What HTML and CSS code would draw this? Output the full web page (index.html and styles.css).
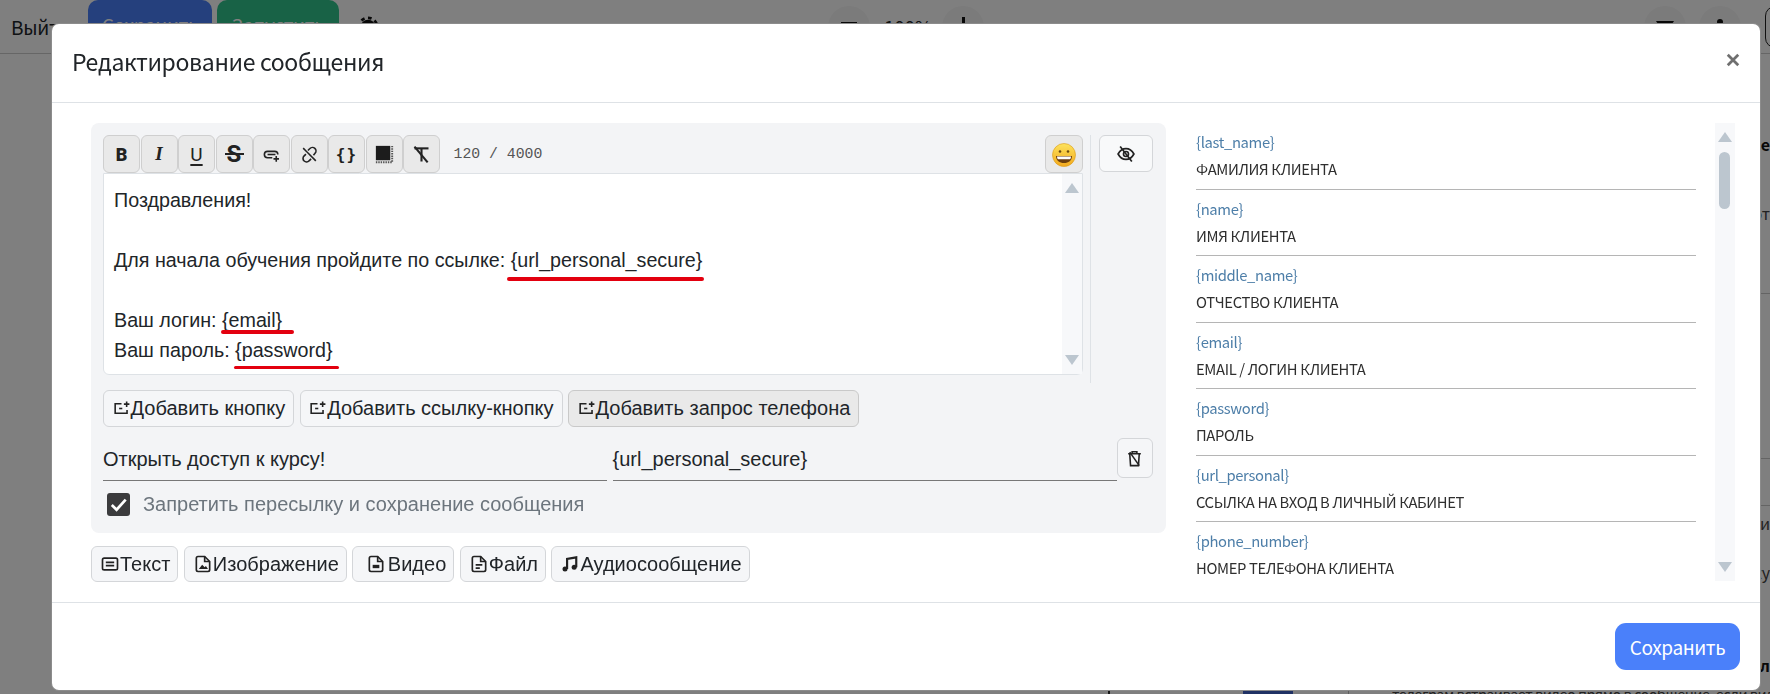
FILE: index.html
```html
<!DOCTYPE html>
<html lang="ru">
<head>
<meta charset="utf-8">
<title>Редактирование сообщения</title>
<link rel="stylesheet" href="styles.css">
</head>
<body>
<div class="behind">
  <header class="topbar">
    <span class="exit">Выйти</span>
    <span class="top-btn top-blue">Сохранить</span>
    <span class="top-btn top-green">Запустить</span>
    <svg class="top-gear" viewBox="0 0 24 24"><circle cx="12" cy="12" r="6" fill="none" stroke="#111" stroke-width="4"/><circle cx="12" cy="12" r="10" fill="none" stroke="#111" stroke-width="3" stroke-dasharray="4 3.8"/></svg>
    <span class="round round-minus"><i class="minus"></i></span>
    <span class="percent">100%</span>
    <span class="round round-plus"><i class="plus"></i></span>
    <span class="round round-filter"><i class="filter"></i></span>
    <span class="round round-dots"><i class="dot"></i></span>
    <span class="outline"></span>
  </header>
  <div class="workspace">
    <div class="preview"><div class="preview-block"></div></div>
    <div class="notes">
      <div class="note note-a strong">Название</div>
      <div class="note note-b">Сообщение от</div>
      <div class="rule rule-a"></div>
      <div class="rule rule-b"></div>
      <div class="rule rule-c"></div>
      <div class="note note-c">Настройки и</div>
      <div class="note note-d">Загрузку</div>
      <div class="note note-e strong">Блоки кл</div>
      <div class="note note-f">телеграм встраивает видео прямо в сообщение, если вид</div>
    </div>
  </div>
</div>

<div class="backdrop"></div>

<section class="modal">
  <header class="modal-head">
    <h1 class="modal-title">Редактирование сообщения</h1>
    <svg class="close" viewBox="0 0 16 16"><path d="M2 2l12 12M14 2L2 14"/></svg>
  </header>

  <div class="modal-body">
    <div class="left">
      <div class="panel">
        <div class="composer">
          <div class="composer-main">
            <div class="toolbar">
              <span class="tool t-b">B</span>
              <span class="tool t-i">I</span>
              <span class="tool t-u">U</span>
              <span class="tool t-s">S</span>
              <span class="tool"><svg class="ti" viewBox="0 0 24 24"><path d="M20 12a4 4 0 0 0-4-4H7a4 4 0 0 0 0 8h6"/><path d="M7 12h10"/><path d="M18 14v7M14.500 17.500h7"/></svg></span>
              <span class="tool"><svg class="ti" viewBox="0 0 24 24"><path d="M10 7l2.500-2.500a4.300 4.300 0 0 1 6.500 6L17 13"/><path d="M14 17.500l-2.500 2.500a4.300 4.300 0 0 1-6.500-6l2.500-2.500"/><path d="M4 4l16 16"/></svg></span>
              <span class="tool t-code">{}</span>
              <span class="tool"><svg class="ti ti-big" viewBox="0 0 24 24"><rect class="solid" x="3" y="3" width="15" height="15"/><path class="dots" d="M20 3v17M3 20h17"/></svg></span>
              <span class="tool"><svg class="ti ti-clear" viewBox="0 0 24 24"><path d="M4 5h16"/><path d="M12 5v15"/><path d="M4 3l15 18"/></svg></span>
              <span class="counter">120 / 4000</span>
              <span class="tool tool-emoji">
                <svg class="emoji" viewBox="0 0 24 24">
                  <defs><linearGradient id="face" x1="0" y1="0" x2="0" y2="1"><stop offset="0" stop-color="#fde35c"/><stop offset="1" stop-color="#f2a91d"/></linearGradient></defs>
                  <circle cx="12" cy="12" r="11.500" fill="url(#face)" stroke="#d99a1c" stroke-width=".6"/>
                  <circle cx="8" cy="8.500" r="1.300" fill="#6b4a10"/><circle cx="16" cy="8.500" r="1.300" fill="#6b4a10"/>
                  <path d="M4 13h16c0 4.500-3.500 7-8 7s-8-2.500-8-7z" fill="#6b3d0c"/>
                  <path d="M5 13.500h14c0 1.200-.3 2-.8 2.800H5.800C5.300 15.500 5 14.700 5 13.500z" fill="#fff"/>
                </svg>
              </span>
            </div>
            <div class="editor">
              <p>Поздравления!</p>
              <p>&nbsp;</p>
              <p>Для начала обучения пройдите по ссылке: {url_personal_secure}</p>
              <p>&nbsp;</p>
              <p>Ваш логин: {email}</p>
              <p>Ваш пароль: {password}</p>
              <span class="mark mark-url"></span>
              <span class="mark mark-email"></span>
              <span class="mark mark-password"></span>
              <div class="editor-scroll"><i class="arrow-up"></i><i class="arrow-down"></i></div>
            </div>
          </div>
          <div class="composer-side">
            <span class="btn eye-btn"><svg class="ic ic-eye" viewBox="0 0 24 24"><path d="M2.500 12S6 5.500 12 5.500 21.500 12 21.500 12 18 18.500 12 18.500 2.500 12 2.500 12z"/><circle cx="12" cy="12" r="3"/><path d="M5 3l14 18"/></svg></span>
          </div>
        </div>

        <div class="action-row">
          <span class="btn act"><svg class="ic" viewBox="0 0 24 24"><path d="M12 6H4v12h15v-4"/><path d="M9 12h4"/><path d="M18.500 3v7M15 6.500h7"/></svg>Добавить кнопку</span>
          <span class="btn act"><svg class="ic" viewBox="0 0 24 24"><path d="M12 6H4v12h15v-4"/><path d="M9 12h4"/><path d="M18.500 3v7M15 6.500h7"/></svg>Добавить ссылку-кнопку</span>
          <span class="btn act act-on"><svg class="ic" viewBox="0 0 24 24"><path d="M12 6H4v12h15v-4"/><path d="M9 12h4"/><path d="M18.500 3v7M15 6.500h7"/></svg>Добавить запрос телефона</span>
        </div>

        <div class="field-row">
          <div class="field">Открыть доступ к курсу!</div>
          <div class="field">{url_personal_secure}</div>
          <span class="btn trash-btn"><svg class="ic ic-trash" viewBox="0 0 24 24"><path d="M4 6h16M9 6V3.500h6V6M6 6l1 15h10l1-15"/><path d="M6 4l12 17"/></svg></span>
        </div>

        <label class="check-row">
          <span class="check"><svg viewBox="0 0 24 24"><path d="M5 12.500l5 5L19.500 7"/></svg></span>
          <span class="check-label">Запретить пересылку и сохранение сообщения</span>
        </label>
      </div>

      <div class="tabs">
        <span class="btn tab"><svg class="ic" viewBox="0 0 24 24"><rect x="3" y="5" width="18" height="14" rx="2"/><path d="M7 10h10M7 14h10"/></svg>Текст</span>
        <span class="btn tab"><svg class="ic" viewBox="0 0 24 24"><path d="M14 3H6a2 2 0 0 0-2 2v14a2 2 0 0 0 2 2h12a2 2 0 0 0 2-2V9z"/><path d="M14 3v6h6"/><path class="fill" d="M7 18l4-5 3 3 1.500-1.500L18 18z"/></svg>Изображение</span>
        <span class="btn tab tab-wide"><svg class="ic" viewBox="0 0 24 24"><path d="M14 3H6a2 2 0 0 0-2 2v14a2 2 0 0 0 2 2h12a2 2 0 0 0 2-2V9z"/><path d="M14 3v6h6"/><rect class="fill" x="8" y="13" width="8" height="4"/></svg>Видео</span>
        <span class="btn tab"><svg class="ic" viewBox="0 0 24 24"><path d="M14 3H6a2 2 0 0 0-2 2v14a2 2 0 0 0 2 2h12a2 2 0 0 0 2-2V9z"/><path d="M14 3v6h6"/><path d="M8 13h8M8 17h5"/></svg>Файл</span>
        <span class="btn tab"><svg class="ic" viewBox="0 0 24 24"><circle class="fill" cx="6" cy="18" r="3"/><circle class="fill" cx="17" cy="16" r="3"/><path class="thicker" d="M8.500 18V6l11-2v12"/></svg>Аудиосообщение</span>
      </div>
    </div>

    <div class="vars">
      <div class="var"><div class="var-key">{last_name}</div><div class="var-label">ФАМИЛИЯ КЛИЕНТА</div></div>
      <div class="var"><div class="var-key">{name}</div><div class="var-label">ИМЯ КЛИЕНТА</div></div>
      <div class="var"><div class="var-key">{middle_name}</div><div class="var-label">ОТЧЕСТВО КЛИЕНТА</div></div>
      <div class="var"><div class="var-key">{email}</div><div class="var-label">EMAIL / ЛОГИН КЛИЕНТА</div></div>
      <div class="var"><div class="var-key">{password}</div><div class="var-label">ПАРОЛЬ</div></div>
      <div class="var"><div class="var-key">{url_personal}</div><div class="var-label">ССЫЛКА НА ВХОД В ЛИЧНЫЙ КАБИНЕТ</div></div>
      <div class="var"><div class="var-key">{phone_number}</div><div class="var-label">НОМЕР ТЕЛЕФОНА КЛИЕНТА</div></div>
    </div>
    <div class="vars-scroll"><i class="arrow-up"></i><i class="thumb"></i><i class="arrow-down"></i></div>
  </div>

  <footer class="modal-foot">
    <span class="save">Сохранить</span>
  </footer>
</section>
</body>
</html>
```

FILE: styles.css
```css
* { box-sizing: border-box; }
html, body { margin: 0; height: 694px; overflow: hidden; background: #fff; }
body { font-family: "Noto Sans CJK SC", "Noto Sans", sans-serif; color: #212529; }

/* page behind the dialog */
.behind { height: 694px; overflow: hidden; }
.topbar { display: flex; align-items: center; height: 54px; padding-left: 11px; border-bottom: 1px solid #ccc; font-size: 19px; letter-spacing: -.3px; white-space: nowrap; }
.topbar > * { flex: none; }
.exit { width: 55px; }
.top-btn { display: flex; align-items: center; justify-content: center; height: 48px; margin-top: -5px; border-radius: 10px; color: #fff; }
.top-blue { width: 124px; margin-left: 22px; background: #4a80fa; }
.top-green { width: 122px; margin-left: 5px; background: #31c48d; }
.top-gear { width: 22px; height: 22px; margin-left: 18px; }
.round { display: flex; align-items: center; justify-content: center; width: 42px; height: 42px; border-radius: 50%; background: #f6f6f6; }
.round-minus { margin-left: 449px; }
.percent { width: 44px; margin-left: 14px; text-align: center; }
.round-plus { margin-left: 14px; }
.round-filter { margin-left: 660px; }
.round-dots { margin-left: 13px; }
.minus { width: 16px; height: 3px; margin-top: -7px; background: #111; }
.plus { position: relative; width: 20px; height: 3px; background: #111; }
.plus::after { content: ""; position: absolute; left: 8.500px; top: -8.500px; width: 3px; height: 20px; background: #111; }
.filter { width: 0; height: 0; margin-top: 2px; border: 9px solid transparent; border-top: 14px solid #111; border-bottom: 0; }
.dot { width: 6px; height: 6px; margin-top: -10px; border-radius: 50%; background: #111; }
.outline { width: 30px; height: 42px; margin-left: 24px; border: 1px solid #222; border-radius: 10px; }
.workspace { display: flex; height: 640px; margin-left: 1108px; border-left: 2px solid #333; }
.preview { width: 239px; padding-left: 133px; border-right: 1px solid #bbb; }
.preview-block { width: 50px; height: 30px; margin-top: 636px; background: #3f63c8; }
.notes { flex: 1; min-width: 0; padding-left: 43px; font-size: 16px; line-height: 24px; white-space: nowrap; }
.note { width: fit-content; margin-left: auto; color: #444; }
.strong { font-weight: 700; color: #111; }
.note-a { margin-top: 78px; }
.note-b { margin-top: 45px; }
.rule { border-top: 1px solid #c9c9c9; }
.rule-a { margin-top: 68px; }
.rule-b { margin-top: 164px; }
.rule-c { margin-top: 46px; }
.note-c { margin-top: 5px; }
.note-d { margin-top: 25px; }
.note-e { margin-top: 69px; }
.note-f { margin: 5px 0 0; font-size: 14.500px; letter-spacing: -.5px; }
.backdrop { position: fixed; inset: 0; background: rgba(0, 0, 0, .5); }

/* dialog */
.modal { position: fixed; left: 51px; top: 23px; width: 1710px; height: 668px; display: flex; flex-direction: column; background: #fff; border: 1px solid rgba(0, 0, 0, .45); border-radius: 8px; }
.modal-head { display: flex; align-items: center; justify-content: space-between; height: 79px; flex: none; padding: 0 20px 4px 20px; border-bottom: 1px solid #dee2e6; }
.modal-title { margin: 0; font-size: 23px; font-weight: 400; line-height: 32px; letter-spacing: -.35px; }
.close { width: 14px; height: 14px; margin-top: -2px; fill: none; stroke: #6f6f6f; stroke-width: 3.200; }
.modal-body { display: flex; height: 499px; flex: none; padding: 20px 0 0 39px; }
.modal-foot { display: flex; justify-content: flex-end; flex: 1; padding: 20px 20px 0 0; border-top: 1px solid #dee2e6; }
.save { display: flex; align-items: center; justify-content: center; width: 125px; height: 47px; border-radius: 11px; background: #4a80fa; color: #fff; font-size: 19px; letter-spacing: -.4px; }

.left { width: 1075px; flex: none; font-family: "Liberation Sans", Arial, sans-serif; }
.panel { height: 410px; padding: 12px 13px 0 12px; border-radius: 8px; background: #f3f4f6; }
.composer { display: flex; height: 248px; }
.composer-main { width: 980px; flex: none; }
.toolbar { display: flex; align-items: center; gap: .5px; height: 38px; }
.tool { position: relative; display: flex; align-items: center; justify-content: center; width: 37px; height: 38px; flex: none; background: #e9e9e9; border: 1px solid #cfcfcf; border-radius: 6px; color: #222; font-family: "Roboto", sans-serif; }
.t-b { font-weight: 900; font-size: 18px; }
.t-i { font-weight: 700; font-style: italic; font-size: 19px; font-family: "Liberation Serif", serif; }
.t-u { font-weight: 400; font-size: 19px; text-decoration: underline; text-decoration-thickness: 1.500px; text-underline-offset: 3px; }
.t-s { font-weight: 700; font-size: 24px; }
.t-s::after { content: ""; position: absolute; left: 8px; right: 8px; top: 16.500px; height: 2px; background: #222; }
.t-code { font-weight: 700; font-size: 16px; font-family: "DejaVu Sans Mono", monospace; letter-spacing: 1px; }
.ti { width: 19px; height: 19px; fill: none; stroke: #222; stroke-width: 2; }
.ti-big { width: 23px; height: 23px; }
.ti-clear { width: 21px; height: 21px; stroke-width: 2.400; }
.ti .solid { fill: #1c1c1c; stroke: none; }
.ti .dots { stroke: #555; stroke-width: 2; stroke-dasharray: 1.500 1; }
.counter { margin-left: 13px; font: 14.800px "Liberation Mono", monospace; color: #555; }
.tool-emoji { margin-left: auto; width: 38px; }
.emoji { width: 24px; height: 24px; margin-top: 1px; }

.editor { position: relative; height: 202px; padding: 11px 10px; background: #fff; border: 1px solid #dee2e6; border-radius: 0 0 6px 6px; font-size: 19.700px; line-height: 30px; color: #212529; }
.editor p { margin: 0; }
.mark { position: absolute; height: 3.500px; border-radius: 2px; background: #e3000f; }
.mark-url { left: 403px; top: 103px; width: 197px; }
.mark-email { left: 117px; top: 156px; width: 73px; }
.mark-password { left: 130px; top: 191.500px; width: 105px; }
.editor-scroll { position: absolute; right: 0; top: 0; bottom: 0; width: 20px; background: #f7f8fa; }
.arrow-up, .arrow-down { position: absolute; left: 50%; width: 0; height: 0; margin-left: -7px; border: 7px solid transparent; }
.arrow-up { top: 9px; border-top: 0; border-bottom: 10px solid #bcc6cf; }
.arrow-down { bottom: 9px; border-bottom: 0; border-top: 10px solid #bcc6cf; }

.composer-side { width: 63px; margin-left: 7px; padding-left: 8px; border-left: 1px solid #dee2e6; }
.btn { display: inline-flex; align-items: center; background: #f5f6f8; border: 1px solid #d4d6d9; border-radius: 6px; color: #212529; white-space: nowrap; }
.eye-btn { justify-content: center; width: 54px; height: 37px; background: #f8f9fa; }
.ic { width: 20px; height: 20px; flex: none; fill: none; stroke: #222; stroke-width: 2; }
.ic .fill { fill: #222; stroke: none; }
.ic .thicker { stroke-width: 2.600; }
.ic-trash { width: 19px; height: 19px; }

.action-row { display: flex; gap: 5.500px; margin-top: 6.500px; }
.act { height: 37px; padding: 0 8px 0 7.500px; font-size: 20px; }
.act .ic { width: 19px; height: 19px; }
.act-on { background: #e9e9e9; border-color: #c9c9c9; }
.field-row { display: flex; gap: 5.500px; height: 42.500px; margin-top: 11.500px; }
.field { display: flex; align-items: center; flex: 1; height: 42.500px; padding-top: 1px; border-bottom: 1px solid #777; font-size: 20px; color: #212529; }
.trash-btn { justify-content: center; width: 36.500px; height: 40px; flex: none; margin-left: -5.500px; }
.check-row { display: flex; align-items: center; height: 23px; margin: 12.500px 0 0 4px; }
.check { display: flex; width: 23px; height: 23px; flex: none; background: #3b3b3d; border-radius: 3px; }
.check svg { fill: none; stroke: #fff; stroke-width: 2.800; }
.check-label { margin-left: 13px; font-size: 20px; color: #6c757d; }
.tabs { display: flex; gap: 5.500px; margin-top: 13px; }
.tab { height: 36px; padding: 0 7px 0 8px; font-size: 20px; }
.tab-wide { padding-left: 13px; }
.tab-wide .ic { margin-right: 1.500px; }

.vars { width: 500px; height: 458px; margin-left: 30px; overflow: hidden; flex: none; }
.var { height: 66.500px; padding-top: 7px; border-bottom: 1px solid #b5b5b5; font-size: 14.800px; line-height: 24px; letter-spacing: -.35px; }
.var:last-child { border-bottom: 0; }
.var-key { color: #4d7ea8; }
.var-label { margin-top: 3px; color: #2f2f2f; }
.vars-scroll { position: relative; width: 20px; height: 458px; margin-left: 19px; flex: none; background: #f7f8fa; }
.thumb { position: absolute; left: 4px; top: 29px; width: 11px; height: 57px; border-radius: 6px; background: #bcc6cf; }
```
